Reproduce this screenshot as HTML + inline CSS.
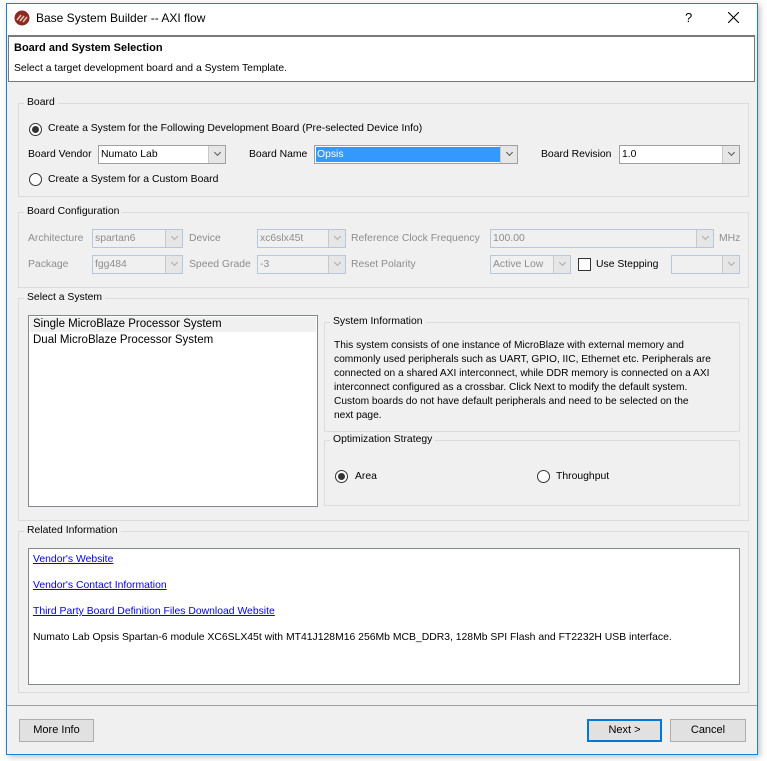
<!DOCTYPE html>
<html><head><meta charset="utf-8">
<style>
*{box-sizing:border-box;margin:0;padding:0}
body{width:767px;height:761px;background:#fff;position:relative;overflow:hidden;font-family:"Liberation Sans",Tahoma,sans-serif;font-size:10.4px;color:#000}
.a{position:absolute;white-space:nowrap}
.win{position:absolute;left:6px;top:3px;width:752px;height:752px;border:1px solid #1883d7;background:#f0f0f0;box-shadow:2px 2px 6px rgba(0,0,0,.25)}
.grp{position:absolute;border:1px solid #dcdcdc}
.gl{position:absolute;background:#f0f0f0;padding:0 3px;top:-8px;left:5px;line-height:14px}
.cb{position:absolute;height:19px;border:1px solid #a0a0a0;background:#fff;padding-left:2px;line-height:17px}
.cb::after{content:"";position:absolute;right:0;top:0;width:16px;height:17px;background:#e6e6e6;border-left:1px solid #c8c8c8}
.cb i{position:absolute;right:5px;top:4px;width:5px;height:5px;border-right:1px solid #555;border-bottom:1px solid #555;transform:rotate(45deg);z-index:2}
.dis{background:#f0f0f0;border-color:#b7c7db;color:#8d8d8d}
.dis i{border-color:#aaa}
.g{color:#8d8d8d}
.rb{position:absolute;width:13px;height:13px;border:1px solid #333;border-radius:50%;background:#fff}
.rb.on::after{content:"";position:absolute;left:2px;top:2px;width:7px;height:7px;border-radius:50%;background:#333}
.btn{position:absolute;height:23px;border:1px solid #adadad;background:#e1e1e1;text-align:center;line-height:21px;font-size:11px}
a{color:#0000ee;text-decoration:underline}
</style></head><body>
<div class="win"></div>
<div class="a" style="left:7px;top:4px;width:750px;height:31px;background:#fff"></div>
<svg class="a" style="left:14px;top:10px" width="16" height="16" viewBox="0 0 16 16"><circle cx="8" cy="8" r="7.5" fill="#8b2a22"/><path d="M3 10 L7 5 M6 11 L10 6 M9 12 L13 7" stroke="#e8c0b0" stroke-width="1.6"/></svg>
<div class="a" style="left:36px;top:11px;font-size:12px">Base System Builder -- AXI flow</div>
<div class="a" style="left:685px;top:10px;font-size:13px">?</div>
<svg class="a" style="left:728px;top:12px" width="11" height="11"><path d="M0 0L11 11M11 0L0 11" stroke="#000" stroke-width="1.1"/></svg>
<div class="a" style="left:8px;top:35px;width:747px;height:47px;background:#fff;border:1px solid #7a7a7a;border-top:2px solid #7a7a7a"></div>
<div class="a" style="left:14px;top:42px;font-weight:bold;font-size:11px">Board and System Selection</div>
<div class="a" style="left:14px;top:63px">Select a target development board and a System Template.</div>

<div class="grp" style="left:18px;top:103px;width:731px;height:94px"><div class="gl">Board</div></div>
<div class="rb on" style="left:29px;top:123px"></div>
<div class="a" style="left:48px;top:123px">Create a System for the Following Development Board (Pre-selected Device Info)</div>
<div class="a" style="left:28px;top:149px">Board Vendor</div>
<div class="cb" style="left:98px;top:145px;width:128px">Numato Lab<i></i></div>
<div class="a" style="left:249px;top:149px">Board Name</div>
<div class="cb" style="left:314px;top:145px;width:204px;padding:0"><span style="display:block;margin:1px;width:184px;height:15px;background:#3399ff;color:#fff;line-height:15px;padding-left:1px">Opsis</span><i></i></div>
<div class="a" style="left:541px;top:149px">Board Revision</div>
<div class="cb" style="left:619px;top:145px;width:121px">1.0<i></i></div>
<div class="rb" style="left:29px;top:173px"></div>
<div class="a" style="left:48px;top:174px">Create a System for a Custom Board</div>

<div class="grp" style="left:18px;top:212px;width:731px;height:76px"><div class="gl">Board Configuration</div></div>
<div class="a g" style="left:28px;top:233px">Architecture</div>
<div class="cb dis" style="left:92px;top:229px;width:91px">spartan6<i></i></div>
<div class="a g" style="left:189px;top:233px">Device</div>
<div class="cb dis" style="left:257px;top:229px;width:89px">xc6slx45t<i></i></div>
<div class="a g" style="left:351px;top:233px">Reference Clock Frequency</div>
<div class="cb dis" style="left:490px;top:229px;width:224px">100.00<i></i></div>
<div class="a g" style="left:719px;top:233px">MHz</div>
<div class="a g" style="left:28px;top:259px">Package</div>
<div class="cb dis" style="left:92px;top:255px;width:91px">fgg484<i></i></div>
<div class="a g" style="left:189px;top:259px">Speed Grade</div>
<div class="cb dis" style="left:257px;top:255px;width:89px">-3<i></i></div>
<div class="a g" style="left:351px;top:259px">Reset Polarity</div>
<div class="cb dis" style="left:490px;top:255px;width:81px">Active Low<i></i></div>
<div class="a" style="left:578px;top:258px;width:13px;height:13px;border:1px solid #333;background:#fff"></div>
<div class="a" style="left:596px;top:259px">Use Stepping</div>
<div class="cb dis" style="left:671px;top:255px;width:69px"><i></i></div>

<div class="grp" style="left:18px;top:298px;width:731px;height:223px"><div class="gl">Select a System</div></div>
<div class="a" style="left:28px;top:315px;width:290px;height:192px;background:#fff;border:1px solid #828790"></div>
<div class="a" style="left:30px;top:317px;width:286px;height:15px;background:#f0f0f0"></div>
<div class="a" style="left:33px;top:318px;font-size:11.5px">Single MicroBlaze Processor System</div>
<div class="a" style="left:33px;top:334px;font-size:11.5px">Dual MicroBlaze Processor System</div>
<div class="grp" style="left:324px;top:322px;width:416px;height:110px"><div class="gl">System Information</div></div>
<div class="a" style="left:334px;top:339px;line-height:14px;font-size:10.2px">This system consists of one instance of MicroBlaze with external memory and<br>commonly used peripherals such as UART, GPIO, IIC, Ethernet etc. Peripherals are<br>connected on a shared AXI interconnect, while DDR memory is connected on a AXI<br>interconnect configured as a crossbar. Click Next to modify the default system.<br>Custom boards do not have default peripherals and need to be selected on the<br>next page.</div>
<div class="grp" style="left:324px;top:440px;width:416px;height:66px"><div class="gl">Optimization Strategy</div></div>
<div class="rb on" style="left:335px;top:470px"></div>
<div class="a" style="left:355px;top:471px">Area</div>
<div class="rb" style="left:537px;top:470px"></div>
<div class="a" style="left:556px;top:471px">Throughput</div>

<div class="grp" style="left:18px;top:531px;width:731px;height:162px"><div class="gl">Related Information</div></div>
<div class="a" style="left:28px;top:548px;width:712px;height:137px;background:#fff;border:1px solid #828790"></div>
<div class="a" style="left:33px;top:554px"><a>Vendor's Website</a></div>
<div class="a" style="left:33px;top:580px"><a>Vendor's Contact Information</a></div>
<div class="a" style="left:33px;top:606px"><a>Third Party Board Definition Files Download Website</a></div>
<div class="a" style="left:33px;top:632px">Numato Lab Opsis Spartan-6 module XC6SLX45t with MT41J128M16 256Mb MCB_DDR3, 128Mb SPI Flash and FT2232H USB interface.</div>

<div class="a" style="left:7px;top:705px;width:750px;height:1px;background:#a0a0a0"></div>
<div class="btn" style="left:19px;top:719px;width:75px">More Info</div>
<div class="btn" style="left:587px;top:719px;width:75px;border:2px solid #0078d7;line-height:19px">Next &gt;</div>
<div class="btn" style="left:670px;top:719px;width:76px">Cancel</div>
</body></html>
